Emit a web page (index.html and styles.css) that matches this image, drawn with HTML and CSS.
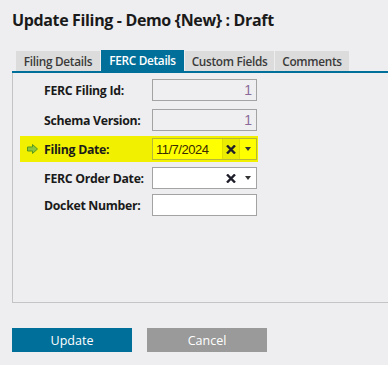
FILE: index.html
```html
<!DOCTYPE html>
<html lang="en">
<head>
  <meta charset="UTF-8">
  <title>Update Filing</title>
  <link rel="stylesheet" href="styles.css">
</head>
<body>

  <h1 class="page-title">Update Filing - Demo {New} : Draft</h1>

  <div class="tabs">
    <div class="tab t-filing">Filing Details</div>
    <div class="tab t-ferc active">FERC Details</div>
    <div class="tab t-custom">Custom Fields</div>
    <div class="tab t-comments">Comments</div>
  </div>

  <div class="panel">
    <div class="row gap-8">
      <span class="marker"></span>
      <label>FERC Filing Id:</label>
      <div class="field disabled"><span class="val">1</span></div>
    </div>
    <div class="row">
      <span class="marker"></span>
      <label>Schema Version:</label>
      <div class="field disabled"><span class="val">1</span></div>
    </div>
    <div class="row current">
      <span class="marker">
        <svg width="11" height="10" viewBox="0 0 11 10">
          <path d="M0.5 3 H5.5 V0.5 L10.5 5 L5.5 9.5 V7 H0.5 Z" fill="#8cc63f" stroke="#5a9a1a" stroke-width="1"/>
        </svg>
      </span>
      <label>Filing Date:</label>
      <div class="field date">
        <span class="text">11/7/2024</span>
        <span class="btn clear">
          <svg width="10" height="9" viewBox="0 0 10 9"><path d="M1 0.5 L9 8.5 M9 0.5 L1 8.5" stroke="#1e1e2a" stroke-width="2.4"/></svg>
        </span>
        <span class="btn drop"><span class="caret"></span></span>
      </div>
    </div>
    <div class="row">
      <span class="marker"></span>
      <label>FERC Order Date:</label>
      <div class="field date plain">
        <span class="text"></span>
        <span class="btn clear">
          <svg width="10" height="9" viewBox="0 0 10 9"><path d="M1 0.5 L9 8.5 M9 0.5 L1 8.5" stroke="#1e1e2a" stroke-width="2.4"/></svg>
        </span>
        <span class="btn drop"><span class="caret"></span></span>
      </div>
    </div>
    <div class="row">
      <span class="marker"></span>
      <label>Docket Number:</label>
      <div class="field"></div>
    </div>
  </div>

  <div class="actions">
    <button class="btn-primary">Update</button>
    <button class="btn-grey">Cancel</button>
  </div>

</body>
</html>
```

FILE: styles.css
```css
body {
  margin: 0;
  background: #eeeef0;
  font-family: "Open Sans", "Noto Sans", sans-serif;
  color: #1a1a1a;
  overflow: hidden;
}
.page-title {
  font-size: 16px;
  font-weight: 700;
  margin: 0;
  padding: 9px 0 0 12px;
  height: 41px;
  box-sizing: border-box;
  letter-spacing: -0.35px;
}
.tabs {
  display: flex;
  gap: 1px;
  margin-left: 12px;
  padding-left: 4px;
  margin-top: 9px;
  border-bottom: 2px solid #006f9a;
  height: 21px;
  align-items: flex-end;
}
.tab {
  background: #dcdcdc;
  color: #3a3a3a;
  font-size: 11.8px;
  font-weight: 600;
  height: 20px;
  line-height: 20px;
  text-align: center;
  white-space: nowrap;
  letter-spacing: -0.3px;
}
.tab.active {
  background: #006f9a;
  color: #fff;
  height: 21px;
  line-height: 21px;
}
.t-filing { width: 84px; }
.t-ferc { width: 83px; }
.t-custom { width: 89px; }
.t-comments { width: 74px; }
.panel {
  margin-left: 12px;
  height: 230px;
  border-left: 1px solid #c4c4c4;
  border-bottom: 1px solid #c4c4c4;
  padding-top: 6px;
  box-sizing: border-box;
}
.row {
  display: flex;
  align-items: center;
  height: 22px;
  margin: 0 0 5px 7px;
  width: 238px;
}
.row.gap-8 {
  margin-bottom: 8px;
}
.row.current {
  background: #f0f000;
  height: 26px;
  margin-top: 1px;
  margin-bottom: 5px;
}
.marker {
  width: 23px;
  display: flex;
  justify-content: center;
  padding-left: 1px;
}
label {
  width: 108px;
  font-size: 12.3px;
  font-weight: 700;
  letter-spacing: -0.3px;
}
.field {
  width: 105px;
  height: 22px;
  box-sizing: border-box;
  border: 1px solid #a3a3a3;
  background: #fff;
  display: flex;
  align-items: center;
}
.field.disabled {
  background: #efeff1;
  justify-content: flex-end;
}
.val {
  color: #8a6a9a;
  padding-right: 4px;
  font-family: "Liberation Sans", Arial, sans-serif;
  font-size: 14px;
}
.field.date {
  background: #ffff00;
  border-color: #b8b838;
}
.field.date.plain {
  background: #fff;
  border-color: #a3a3a3;
}
.text {
  flex: 1;
  padding-left: 3px;
  font-family: "Liberation Sans", Arial, sans-serif;
  font-size: 13px;
  color: #3a2a00;
  letter-spacing: -0.5px;
}
.btn {
  width: 16px;
  height: 100%;
  display: flex;
  align-items: center;
  justify-content: center;
}
.btn.clear {
  border-left: 1px solid #dede00;
  border-right: 1px solid #dede00;
  background: #ecec00;
}
.plain .btn.clear {
  background: none;
  border-color: transparent;
}
.caret {
  width: 0;
  height: 0;
  border-left: 3.5px solid transparent;
  border-right: 3.5px solid transparent;
  border-top: 4px solid #333;
}
.actions {
  display: flex;
  gap: 15px;
  margin: 25px 0 0 12px;
}
.actions button {
  width: 120px;
  height: 24px;
  border: none;
  color: #fff;
  font-family: "Open Sans", "Noto Sans", sans-serif;
  font-size: 12.5px;
  padding: 0;
}
.btn-primary {
  background: #006f9a;
}
.btn-grey {
  background: #9a9a9a;
}
```
